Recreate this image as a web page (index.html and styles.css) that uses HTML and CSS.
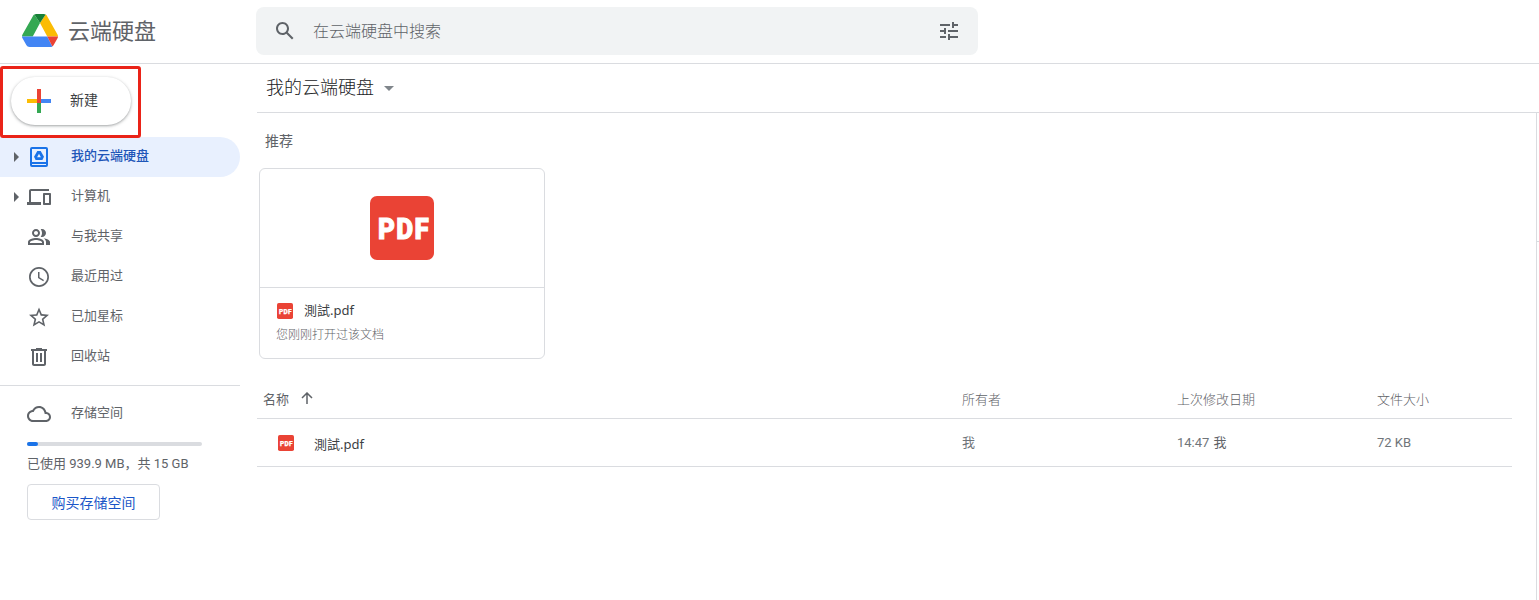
FILE: index.html
```
<!DOCTYPE html>
<html lang="zh-CN">
<head>
  <meta charset="UTF-8">
  <meta name="viewport" content="width=device-width, initial-scale=1.0">
  <title>我的云端硬盘</title>
  <link rel="stylesheet" href="styles.css">
</head>
<body>
  <header class="header">
    <div class="brand">
      <svg class="brand__logo" viewBox="0 0 87.3 78" preserveAspectRatio="none">
        <path fill="#34a853" d="M43.650 21 29.900 1.200c-1.350.8-2.500 1.900-3.300 3.300L1.200 48.500A9 9 0 0 0 0 53h26z"/>
        <path fill="#fbbc04" d="M86.100 48.500 60.700 4.500c-.8-1.400-1.950-2.500-3.300-3.300L43.650 21 61.300 53h26a9 9 0 0 0-1.200-4.500z"/>
        <path fill="#188038" d="M43.650 21 57.400 1.200A9 9 0 0 0 52.900 0H34.400c-1.600 0-3.150.45-4.500 1.200z"/>
        <path fill="#4285f4" d="M0 53h61.300l12.250 23.800a9 9 0 0 1-4.500 1.200H18.250c-3.300 0-6.200-1.700-7.800-4.500L1.200 57.500A9 9 0 0 1 0 53z"/>
        <path fill="#ea4335" d="M61.300 53h26a9 9 0 0 1-1.200 4.500l-9.250 16c-.8 1.400-1.950 2.500-3.300 3.300z"/>
      </svg>
      <span class="brand__name">云端硬盘</span>
    </div>
    <div class="search">
      <svg class="icon" viewBox="0 0 24 24"><path d="M20.490 19l-5.730-5.730C15.530 12.200 16 10.910 16 9.500 16 5.910 13.090 3 9.500 3S3 5.910 3 9.500 5.910 16 9.500 16c1.410 0 2.700-.47 3.770-1.240L19 20.490 20.490 19zM5 9.500C5 7.010 7.010 5 9.500 5S14 7.010 14 9.500 11.990 14 9.500 14 5 11.990 5 9.500z"/></svg>
      <span class="search__text">在云端硬盘中搜索</span>
      <svg class="icon" viewBox="0 0 24 24"><path d="M3 17v2h6v-2H3zM3 5v2h10V5H3zm10 16v-2h8v-2h-8v-2h-2v6h2zM7 9v2H3v2h4v2h2V9H7zm14 4v-2H11v2h10zm-6-4h2V7h4V5h-4V3h-2v6z"/></svg>
    </div>
  </header>
  <div class="page">
    <aside class="sidebar">
      <div class="highlight"></div>
      <button class="new-button">
        <svg class="new-button__plus" viewBox="0 0 24 24">
          <path fill="#ea4335" d="M10 0h4v10l-4 4z"/>
          <path fill="#fbbc04" d="M0 10h10v4H0z"/>
          <path fill="#4285f4" d="M14 10h10v4H14z"/>
          <path fill="#34a853" d="M10 14h4v10h-4z"/>
          <path fill="#ea4335" d="M10 10h4v4h-4z"/>
        </svg>
        <span class="new-button__label">新建</span>
      </button>
      <nav class="nav">
        <a class="nav__item is-active">
          <svg class="nav__arrow" viewBox="0 0 5 10"><path d="M0 0l5 5-5 5z"/></svg>
          <svg class="icon" viewBox="0 0 24 24"><path d="M19 2H5a2 2 0 0 0-2 2v16a2 2 0 0 0 2 2h14a2 2 0 0 0 2-2V4a2 2 0 0 0-2-2zm0 18H5v-1h14v1zm0-3H5V4h14v13z"/><path fill-rule="evenodd" d="M10.300 6h3.400l3.300 5.700-1.600 3.300H8.600L7 11.700zM12 8.800l-1.900 3.400h3.800z"/></svg>
          <span class="nav__label">我的云端硬盘</span>
        </a>
        <a class="nav__item">
          <svg class="nav__arrow" viewBox="0 0 5 10"><path d="M0 0l5 5-5 5z"/></svg>
          <svg class="icon" viewBox="0 0 24 24"><path d="M4 6h18V4H4c-1.100 0-2 .9-2 2v11H0v3h14v-3H4V6zm19 2h-6c-.55 0-1 .45-1 1v10c0 .55.45 1 1 1h6c.55 0 1-.45 1-1V9c0-.55-.45-1-1-1zm-1 10h-4v-8h4v8z"/></svg>
          <span class="nav__label">计算机</span>
        </a>
        <a class="nav__item">
          <span class="nav__arrow"></span>
          <svg class="icon" viewBox="0 0 24 24"><path d="M9 12c2.210 0 4-1.790 4-4s-1.790-4-4-4-4 1.790-4 4 1.790 4 4 4zm0-6c1.100 0 2 .9 2 2s-.9 2-2 2-2-.9-2-2 .9-2 2-2zm0 7c-2.670 0-8 1.340-8 4v3h16v-3c0-2.660-5.330-4-8-4zm6 5H3v-.990C3.200 16.290 6.300 15 9 15s5.800 1.290 6 2v1zM15 12c2.210 0 4-1.790 4-4s-1.790-4-4-4c-.47 0-.91.100-1.330.24C14.500 5.270 15 6.580 15 8s-.5 2.730-1.330 3.760c.42.140.86.240 1.330.240zM16.670 13.130C18.040 14.060 19 15.320 19 17v3h4v-3c0-2.180-3.580-3.470-6.330-3.870z"/></svg>
          <span class="nav__label">与我共享</span>
        </a>
        <a class="nav__item">
          <span class="nav__arrow"></span>
          <svg class="icon" viewBox="0 0 24 24"><path d="M11.990 2C6.470 2 2 6.480 2 12s4.470 10 9.990 10C17.520 22 22 17.520 22 12S17.520 2 11.990 2zM12 20.300a8.300 8.300 0 1 1 0-16.600 8.300 8.300 0 0 1 0 16.600zM12.500 7H11v6l5.250 3.150.75-1.230-4.500-2.670z"/></svg>
          <span class="nav__label">最近用过</span>
        </a>
        <a class="nav__item">
          <span class="nav__arrow"></span>
          <svg class="icon" viewBox="0 0 24 24"><path d="M22 9.740l-7.190-.62L12 2.500 9.190 9.130 2 9.740l5.460 4.730-1.640 7.030L12 17.770l6.180 3.730-1.630-7.030L22 9.740zM12 15.900l-3.760 2.270 1-4.280-3.320-2.880 4.380-.38L12 6.600l1.710 4.040 4.380.38-3.320 2.880 1 4.280L12 15.900z"/></svg>
          <span class="nav__label">已加星标</span>
        </a>
        <a class="nav__item">
          <span class="nav__arrow"></span>
          <svg class="icon" viewBox="0 0 24 24"><path d="M15 4V3H9v1H4v2h1v13c0 1.100.9 2 2 2h10c1.100 0 2-.9 2-2V6h1V4h-5zm2 15H7V6h10v13zM9 8h2v9H9zm4 0h2v9h-2z"/></svg>
          <span class="nav__label">回收站</span>
        </a>
      </nav>
      <div class="storage">
        <a class="nav__item">
          <span class="nav__arrow"></span>
          <svg class="icon" viewBox="0 0 24 24"><path d="M19.350 10.040C18.670 6.590 15.640 4 12 4 9.110 4 6.600 5.640 5.350 8.040 2.340 8.360 0 10.910 0 14c0 3.310 2.690 6 6 6h13c2.760 0 5-2.240 5-5 0-2.640-2.050-4.780-4.650-4.960zM19 18H6c-2.210 0-4-1.790-4-4 0-2.050 1.530-3.760 3.560-3.970l1.070-.11.5-.95C8.080 7.140 9.940 6 12 6c2.620 0 4.880 1.860 5.390 4.430l.3 1.500 1.530.11c1.560.1 2.780 1.410 2.780 2.960 0 1.650-1.350 3-3 3z"/></svg>
          <span class="nav__label">存储空间</span>
        </a>
        <div class="storage__bar"><div class="storage__used"></div></div>
        <div class="storage__text">已使用 939.9 MB，共 15 GB</div>
        <button class="storage__buy">购买存储空间</button>
      </div>
    </aside>
    <main class="main">
      <div class="title">
        <span class="title__text">我的云端硬盘</span>
        <svg class="title__arrow" viewBox="0 0 10 5"><path d="M0 0h10L5 5z"/></svg>
      </div>
      <div class="content">
        <div class="files">
          <h2 class="section-title">推荐</h2>
          <div class="card">
            <div class="card__preview">
              <svg class="card__pdf" viewBox="0 0 64 64"><rect width="64" height="64" rx="7"/><text x="8" y="43" textLength="52" lengthAdjust="spacingAndGlyphs">PDF</text></svg>
            </div>
            <div class="card__info">
              <svg class="pdf-icon" viewBox="0 0 64 64"><rect width="64" height="64" rx="7"/><text x="8" y="43" textLength="52" lengthAdjust="spacingAndGlyphs">PDF</text></svg>
              <span class="card__name">測試.pdf</span>
              <span class="card__note">您刚刚打开过该文档</span>
            </div>
          </div>
          <div class="row row--head">
            <div class="row__name">名称
              <svg class="row__sort" viewBox="0 0 12 12"><path d="M6 12V1M1 6l5-5 5 5"/></svg>
            </div>
            <div>所有者</div>
            <div>上次修改日期</div>
            <div>文件大小</div>
          </div>
          <div class="row">
            <div class="row__file">
              <svg class="pdf-icon" viewBox="0 0 64 64"><rect width="64" height="64" rx="7"/><text x="8" y="43" textLength="52" lengthAdjust="spacingAndGlyphs">PDF</text></svg>
              <span class="row__filename">測試.pdf</span>
            </div>
            <div class="row__owner">我</div>
            <div class="row__date">14:47 <span class="row__by">我</span></div>
            <div class="row__size">72 KB</div>
          </div>
        </div>
        <div class="side-panel"></div>
      </div>
    </main>
  </div>
</body>
</html>
```
FILE: styles.css
```
* {
  box-sizing: border-box;
}

html,
body {
  margin: 0;
  height: 100%;
  overflow: hidden;
}

body {
  display: flex;
  flex-direction: column;
  font-family: Roboto, "Noto Sans CJK SC", sans-serif;
  font-size: 13px;
  color: #5f6368;
  background: #fff;
}

svg {
  display: block;
  flex: none;
}

button {
  font: inherit;
  background: #fff;
  cursor: pointer;
}

.icon {
  width: 24px;
  height: 24px;
  fill: #5f6368;
}

.pdf-icon {
  width: 16px;
  height: 16px;
}

.card__pdf {
  width: 64px;
  height: 64px;
}

.pdf-icon rect,
.card__pdf rect {
  fill: #ea4335;
}

.pdf-icon text,
.card__pdf text {
  font: 900 30px Roboto, sans-serif;
  letter-spacing: 1.5px;
  fill: #fff;
  stroke: #fff;
  stroke-width: 1px;
}

.header {
  display: flex;
  flex: none;
  height: 64px;
  padding-top: 7px;
  border-bottom: 1px solid #dadce0;
}

.brand {
  display: flex;
  align-items: center;
  width: 256px;
  height: 48px;
  padding-left: 22px;
}

.brand__logo {
  width: 36px;
  height: 33px;
  margin-bottom: 1px;
}

.brand__name {
  margin-left: 10px;
  padding-top: 2px;
  font-size: 22px;
  line-height: 32px;
}

.search {
  display: flex;
  align-items: center;
  width: 722px;
  height: 48px;
  padding: 0 17px;
  border-radius: 8px;
  background: #f1f3f4;
}

.search__text {
  flex: 1;
  margin-left: 16px;
  padding-bottom: 2px;
  font-size: 16px;
  font-weight: 300;
}

.page {
  display: flex;
  flex: 1;
  min-height: 0;
}

.sidebar {
  position: relative;
  flex: none;
  width: 240px;
  padding-top: 13px;
}

.highlight {
  position: absolute;
  top: 2px;
  left: 0;
  width: 141px;
  height: 72px;
  border: 3px solid #ea2318;
  border-radius: 3px;
}

.new-button {
  display: flex;
  align-items: center;
  width: 120px;
  height: 48px;
  margin: 0 0 12px 11px;
  padding: 0 0 0 16px;
  border: 0;
  border-radius: 24px;
  box-shadow: 0 1px 2px rgba(60, 64, 67, .3), 0 1px 3px 1px rgba(60, 64, 67, .15);
  font-size: 14px;
  color: #3c4043;
}

.new-button__plus {
  width: 24px;
  height: 24px;
  margin-right: 19px;
}

.new-button__label {
  padding-bottom: 4px;
}

.nav__item {
  display: flex;
  align-items: center;
  height: 40px;
  padding-left: 14px;
}

.nav__item.is-active {
  border-radius: 0 20px 20px 0;
  background: #e8f0fe;
  font-weight: 500;
  color: #1e56b8;
}

.is-active .icon {
  fill: #1a73e8;
}

.nav__arrow {
  width: 5px;
  height: 10px;
  margin-right: 8px;
  fill: #5f6368;
}

.nav__label {
  margin-left: 20px;
  padding-bottom: 2px;
  line-height: 20px;
}

.storage {
  margin-top: 8px;
  padding-top: 8px;
  border-top: 1px solid #dadce0;
}

.storage__bar {
  width: 175px;
  height: 4px;
  margin: 8px 0 0 27px;
  border-radius: 2px;
  background: #dadce0;
}

.storage__used {
  width: 11px;
  height: 4px;
  border-radius: 2px;
  background: #1a73e8;
}

.storage__text {
  margin: 8px 0 10px 27px;
  line-height: 20px;
}

.storage__buy {
  width: 133px;
  height: 36px;
  margin-left: 27px;
  padding: 0;
  border: 1px solid #dadce0;
  border-radius: 4px;
  font-size: 14px;
  color: #1a56c8;
}

.main {
  display: flex;
  flex: 1;
  flex-direction: column;
  margin-left: 17px;
}

.title {
  display: flex;
  align-items: center;
  height: 49px;
  padding-left: 9px;
  border-bottom: 1px solid #dadce0;
  font-size: 18px;
  font-weight: 300;
  color: #202124;
}

.title__text {
  padding-bottom: 4px;
}

.title__arrow {
  width: 10px;
  height: 5px;
  margin-left: 10px;
  fill: #80868b;
}

.content {
  display: flex;
  flex: 1;
  justify-content: space-between;
}

.files {
  width: 1255px;
  padding-top: 18px;
}

.side-panel {
  width: 3px;
  border-left: 1px solid #dadce0;
  background: linear-gradient(#dadce0, #dadce0) 0 128px / 100% 1px no-repeat;
}

.section-title {
  margin: 0 0 17px 8px;
  font-size: 14px;
  font-weight: 400;
  line-height: 20px;
}

.card {
  width: 286px;
  height: 191px;
  margin-left: 2px;
  border: 1px solid #dadce0;
  border-radius: 6px;
}

.card__preview {
  display: flex;
  justify-content: center;
  height: 119px;
  padding-top: 27px;
  border-bottom: 1px solid #dadce0;
}

.card__info {
  display: grid;
  grid-template-columns: 28px 1fr;
  grid-template-rows: 24px 24px;
  align-items: center;
  padding: 11px 0 0 16px;
}

.card__info .pdf-icon {
  margin-left: 1px;
}

.card__name,
.row__filename {
  font-family: "Noto Sans", "Noto Sans CJK TC", sans-serif;
  color: #3c4043;
}

.card__name {
  padding-bottom: 3px;
}

.card__note {
  grid-column: 1 / 3;
  padding-bottom: 3px;
  font-size: 12px;
  font-weight: 300;
}

.row {
  display: grid;
  grid-template-columns: 705px 215px 200px 1fr;
  align-items: center;
  height: 48px;
  border-bottom: 1px solid #dadce0;
}

.row--head {
  height: 40px;
  margin-top: 20px;
  padding-bottom: 1px;
  font-weight: 300;
}

.row__name,
.row__file {
  display: flex;
  align-items: center;
}

.row__name {
  padding-left: 6px;
  font-weight: 400;
}

.row__sort {
  width: 12px;
  height: 12px;
  margin-left: 12px;
  fill: none;
  stroke: #5f6368;
  stroke-width: 1.5;
}

.row__file {
  padding-left: 21px;
}

.row__filename {
  margin-left: 20px;
  padding-top: 1px;
}

.row__owner,
.row__date {
  padding-bottom: 2px;
  color: #70757a;
}

.row__size {
  color: #70757a;
}

.row__by {
  margin-left: 1px;
  color: #5f6368;
}
```
